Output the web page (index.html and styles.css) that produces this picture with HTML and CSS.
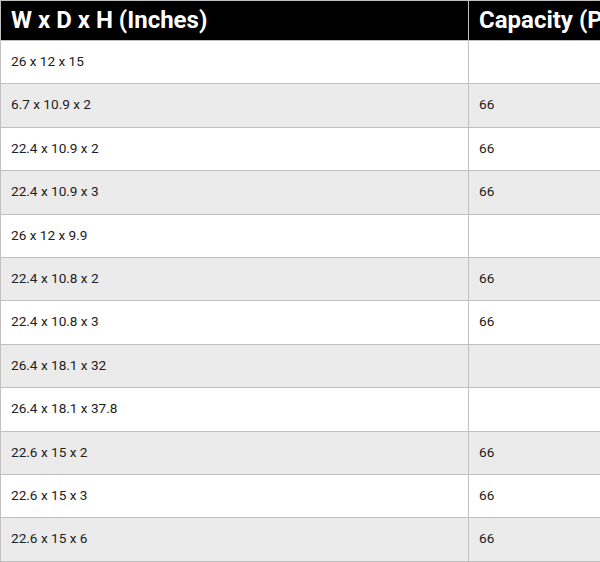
FILE: index.html
```html
<!DOCTYPE html>
<html>
<head>
<meta charset="utf-8">
<link rel="stylesheet" href="styles.css">
</head>
<body>
<table class="spec">
  <thead>
    <tr><th class="c1">W x D x H (Inches)</th><th class="c2">Capacity (Pounds)</th></tr>
  </thead>
  <tbody>
    <tr><td>26 x 12 x 15</td><td></td></tr>
    <tr><td>6.7 x 10.9 x 2</td><td>66</td></tr>
    <tr><td>22.4 x 10.9 x 2</td><td>66</td></tr>
    <tr><td>22.4 x 10.9 x 3</td><td>66</td></tr>
    <tr><td>26 x 12 x 9.9</td><td></td></tr>
    <tr><td>22.4 x 10.8 x 2</td><td>66</td></tr>
    <tr><td>22.4 x 10.8 x 3</td><td>66</td></tr>
    <tr><td>26.4 x 18.1 x 32</td><td></td></tr>
    <tr><td>26.4 x 18.1 x 37.8</td><td></td></tr>
    <tr><td>22.6 x 15 x 2</td><td>66</td></tr>
    <tr><td>22.6 x 15 x 3</td><td>66</td></tr>
    <tr><td>22.6 x 15 x 6</td><td>66</td></tr>
  </tbody>
</table>
</body>
</html>
```
FILE: styles.css
```css
html, body {
  margin: 0;
  padding: 0;
  background: #fff;
  overflow: hidden;
}
.spec {
  border-collapse: collapse;
  font-family: Roboto, "Liberation Sans", sans-serif;
  table-layout: fixed;
  width: 936px;
}
.spec th {
  background: #000;
  color: #fff;
  font-size: 24px;
  font-weight: 700;
  text-align: left;
  height: 39px;
  padding: 0 10px;
  border: 1px solid #c0c0c0;
  line-height: 39px;
  white-space: nowrap;
}
.spec .c1 { width: 447px; }
.spec td {
  font-size: 13.6px;
  color: #222;
  padding: 11px 10px 13px;
  line-height: 18.4px;
  border: 1px solid #c0c0c0;
  height: 18.4px;
}
.spec tbody tr:nth-child(even) td {
  background: #ebebeb;
}
```
